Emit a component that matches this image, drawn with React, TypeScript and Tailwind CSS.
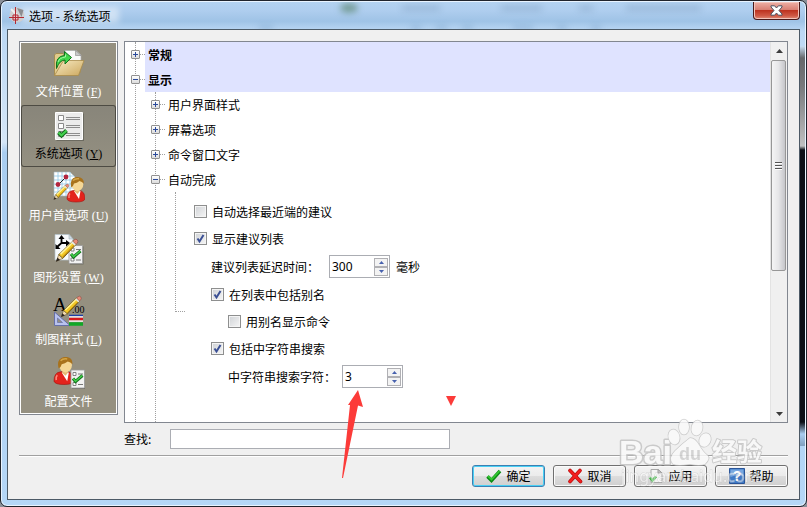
import { useState, type ReactNode } from "react";
import clsx from "clsx";

interface SideItem {
  id: string;
  label: string;
  hotkey?: string;
  icon: ReactNode;
}

// tip sits at 0,20 and the eraser at 20,0
function Pencil({ x = 0, y = 0, scale = 1 }: { x?: number; y?: number; scale?: number }) {
  return (
    <g transform={`translate(${x} ${y}) scale(${scale})`}>
      <path d="M2 14.500 15 2 18 5 5.800 18z" fill="#f3c925" stroke="#5b4a10" strokeWidth="0.8" />
      <path d="M3.800 14 15.200 3" stroke="#fff29a" strokeWidth="1.400" />
      <path d="M5.800 16.800 17.200 5.200" stroke="#b98510" strokeWidth="1" />
      <path d="M16.500.8Q18-.5 19.200.8T19.300 3.800L18 5 15 2z" fill="#e98a78" stroke="#8a5148" strokeWidth="0.6" />
      <path d="M14.300 2.700 17.300 5.700" stroke="#e4e8ec" strokeWidth="1.500" />
      <path d="M0 20.500 2 14.500 5.800 18z" fill="#f6ddb4" stroke="#5b4a10" strokeWidth="0.5" />
      <path d="M-.5 21 .8 17.200 3.300 19.500z" fill="#2a2420" />
    </g>
  );
}

function Person({ x = 0, y = 0 }: { x?: number; y?: number }) {
  return (
    <g transform={`translate(${x} ${y})`}>
      <path d="M0 22Q0 14 6 13.500H12Q18 14 18 22 17 25 9 25T0 22z" fill="#e3231c" stroke="#a31410" strokeWidth="0.6" />
      <path d="M3 16.500Q1.500 18 2 21" stroke="#ff8a7c" strokeWidth="1.400" fill="none" />
      <path d="M7 14H13.500L12 22z" fill="#fff" />
      <path d="M7.500 10H12.500V14.500L10.500 17 7.500 14.500z" fill="#e5b975" />
      <ellipse cx="10.500" cy="7.500" rx="5.800" ry="6.500" fill="#f5d795" />
      <path d="M4.200 10.500Q2 1.500 9 0 17-.8 16.800 6.500 15 4.500 12.500 4 10 6 7 6.500 6.500 9 4.200 10.500z" fill="#a8721c" />
      <path d="M6 3.500Q8 1.200 12 1.800" stroke="#d4a648" strokeWidth="1.400" fill="none" />
    </g>
  );
}

function MiniList({ x = 0, y = 0 }: { x?: number; y?: number }) {
  return (
    <g transform={`translate(${x} ${y})`}>
      <path d="M1 1H14.500V19H1z" fill="#55554c" opacity="0.6" />
      <path d="M0 0H13.500V18H0z" fill="#f2f2f2" stroke="#9a9a9a" strokeWidth="0.8" />
      <path d="M2 2.500H5V5.500H2zM2 12.500H5V15.500H2z" fill="#fff" stroke="#777" strokeWidth="0.9" />
      <path d="M7 4H12M7 14.500H12" stroke="#777" />
      <path d="M2 8.500 4.500 11.500 11.500 5.500" fill="none" stroke="#14701c" strokeWidth="3" />
      <path d="M2.200 8.500 4.500 11.200 11.300 5.500" fill="none" stroke="#3fd04a" strokeWidth="1.500" />
    </g>
  );
}

const svgProps = { width: 32, height: 32, viewBox: "0 0 32 32", fill: "none", "aria-hidden": true } as const;

const SIDE_ITEMS: SideItem[] = [
  {
    id: "files",
    label: "文件位置",
    hotkey: "F",
    icon: (
      <svg {...svgProps}>
        <defs>
          <linearGradient id="folder" x1="0" y1="0" x2="1" y2="1">
            <stop offset="0" stopColor="#f7ebc4" />
            <stop offset="1" stopColor="#cda85e" />
          </linearGradient>
        </defs>
        <path d="M1.500 28.500V8L3 6.500H10L12 9H27V26z" fill="#e2cb8c" stroke="#a78d52" />
        <path d="M12 20V3.500H23L28 8V20z" fill="#fafafa" stroke="#aaa" strokeWidth="0.7" />
        <path d="M22.500 3.500V8.500H28z" fill="#c9c9c9" stroke="#888" strokeWidth="0.6" />
        <path d="M1.500 28.500 9 16 11 13.500H31L25.500 28.500z" fill="url(#folder)" stroke="#a98b4a" strokeWidth="0.8" />
        <path d="M3.500 21.500Q2 9 11.500 8.500V4.500L18.500 10.500 12 17V13Q6.500 13 3.500 21.500z" fill="#3fd64a" stroke="#11701c" />
        <path d="M5 15Q6.500 10.500 12.500 10V7.500" stroke="#a6f5a4" />
      </svg>
    ),
  },
  {
    id: "system",
    label: "系统选项",
    hotkey: "Y",
    icon: (
      <svg {...svgProps}>
        <path d="M3.500 4.500H31V32H3.500z" fill="#55554c" opacity="0.6" />
        <path d="M2.500 3.500H29.500V30.500H2.500z" fill="#ececec" stroke="#fff" />
        <path d="M5.500 6.500H10.500V11.500H5.500zM5.500 14.500H10.500V19.500H5.500zM5.500 22.500H10.500V27.500H5.500z" fill="#fff" stroke="#8b8b8b" />
        <path d="M13 8.500H27M13 10.500H27M13 16.500H27M13 18.500H27M13 24.500H27M13 26.500H27" stroke="#8d8d8d" />
        <path d="M5.500 23.500 8.500 26.500 13.500 21.500" stroke="#126b1c" strokeWidth="4" />
        <path d="M5.500 23.500 8.500 26.300 13.500 21.500" stroke="#43d24e" strokeWidth="2" />
      </svg>
    ),
  },
  {
    id: "user",
    label: "用户首选项",
    hotkey: "U",
    icon: (
      <svg {...svgProps}>
        <path d="M1 1H17L22 6V25H1z" fill="#fff" stroke="#a8bac4" strokeWidth="0.6" />
        <path d="M5 1V25M9 1V25M13 1V25M17 1V25M1 5H21M1 9H22M1 13H22M1 17H22M1 21H22" stroke="#8ec5e4" strokeWidth="0.8" />
        <path d="M5 14 13 6" stroke="#222" />
        <circle cx="5" cy="13.500" r="2.400" fill="#b3263f" />
        <circle cx="13" cy="6" r="2.400" fill="#b3263f" />
        <Person x={14} y={6} />
        <Pencil x={1} y={13} scale={0.75} />
      </svg>
    ),
  },
  {
    id: "drawing",
    label: "图形设置",
    hotkey: "W",
    icon: (
      <svg {...svgProps}>
        <path d="M2 1.500H16L20 6V27H2z" fill="#f7fafc" stroke="#b2c2cc" strokeWidth="0.7" />
        <path d="M16 1.500V6H20z" fill="#d3dde4" stroke="#a2b2bc" strokeWidth="0.6" />
        <path d="M8.500 4V10L4 14M8.500 10H15" stroke="#000" strokeWidth="1.800" />
        <path d="M5.500 6 8.500 2 11.500 6zM2.500 11V16H7.500z" fill="#000" />
        <path d="M13 7 17 10 13 13.500z" fill="#000" />
        <MiniList x={16} y={12.500} />
        <Pencil x={3.500} y={6} scale={1.080} />
      </svg>
    ),
  },
  {
    id: "style",
    label: "制图样式",
    hotkey: "L",
    icon: (
      <svg {...svgProps}>
        <text x="0" y="16" fontSize="19" fontFamily="Liberation Serif, serif" fill="#000">A</text>
        <text x="19" y="18" fontSize="10" fontFamily="Liberation Serif, serif" fill="#000">.00</text>
        <path d="M1.500 17V30.500H17z" fill="#b9c2ee" stroke="#6670a8" />
        <path d="M4.500 23V27.500H9.500z" fill="#959080" stroke="#6670a8" strokeWidth="0.7" />
        <path d="M16 20.500H30" stroke="#1c3fa8" strokeWidth="1.500" />
        <path d="M16 22H30M16 26H30" stroke="#fff" strokeWidth="1.500" />
        <path d="M16 24H30" stroke="#d3181c" strokeWidth="2.500" />
        <path d="M16 29H30" stroke="#10a826" strokeWidth="3.500" />
        <Pencil x={8.500} y={1} />
      </svg>
    ),
  },
  {
    id: "profile",
    label: "配置文件",
    icon: (
      <svg {...svgProps}>
        <g transform="translate(1 0) scale(1.100)">
          <Person />
        </g>
        <MiniList x={18} y={13} />
      </svg>
    ),
  },
];

function Expander({ open, onToggle, label }: { open: boolean; onToggle?: () => void; label: string }) {
  return (
    <>
      <button
        type="button"
        aria-label={label}
        aria-expanded={open}
        onClick={onToggle}
        className="-ml-[5px] grid h-[9px] w-[9px] shrink-0 place-items-center rounded-[1px] border border-[#919191] bg-gradient-to-b from-white to-[#dcdcdc]"
      >
        <svg width="5" height="5" viewBox="0 0 5 5" stroke="#2b4a9b" aria-hidden>
          <path d={open ? "M0 2.500H5" : "M0 2.500H5M2.500 0V5"} />
        </svg>
      </button>
      <span className="h-px w-[5px] shrink-0 border-t border-dotted border-[#a0a0a0]" />
    </>
  );
}

function Group({ title, open = false, strong = false }: { title: string; open?: boolean; strong?: boolean }) {
  const [isOpen, setOpen] = useState(open);
  return (
    <div className="flex h-[25px] items-center">
      <Expander open={isOpen} onToggle={() => setOpen(!isOpen)} label={title} />
      <span className={clsx("flex h-full flex-1 items-center pl-[3px]", strong && "bg-[#dfe3ff] font-bold")}>{title}</span>
    </div>
  );
}

function Check({ label, checked = false, className }: { label: string; checked?: boolean; className?: string }) {
  return (
    <label className={clsx("flex h-[27px] items-center gap-[5px]", className)}>
      <span className="relative h-[13px] w-[13px] shrink-0">
        <input
          type="checkbox"
          defaultChecked={checked}
          className="peer block h-[13px] w-[13px] appearance-none border border-[#8e8f8f] bg-gradient-to-br from-[#cfd2d6] to-[#f6f6f6] shadow-[inset_0_0_0_1px_#f4f4f4]"
        />
        <svg
          className="pointer-events-none absolute inset-0 hidden peer-checked:block"
          width="13"
          height="13"
          viewBox="0 0 13 13"
          fill="none"
          aria-hidden
        >
          <path d="M3.500 6.500 5.500 9.500 9.500 3" stroke="#3a4f94" strokeWidth="2" />
        </svg>
      </span>
      {label}
    </label>
  );
}

interface SpinProps {
  id: string;
  label: string;
  value: number;
  unit?: string;
  className?: string;
  labelClass?: string;
}

function Spin({ id, label, value, unit, className, labelClass }: SpinProps) {
  const [v, setV] = useState(value);
  return (
    <div className={clsx("flex h-[29px] items-center gap-1.5", className)}>
      <label htmlFor={id} className={labelClass}>{label}</label>
      <div className="flex h-[23px] w-[61px] items-center border border-[#abadb3] bg-white pr-px">
        <input
          id={id}
          value={v}
          onChange={(e) => setV(Number(e.target.value) || 0)}
          className="h-full w-0 flex-1 bg-transparent pl-0.5 font-['Noto_Sans',sans-serif] outline-none"
        />
        <div className="flex flex-col">
          {[1, -1].map((step) => (
            <button
              key={step}
              type="button"
              aria-label={step > 0 ? "增加" : "减少"}
              onClick={() => setV(v + step)}
              className="grid h-[9px] w-[14px] place-items-center border border-[#b0b0b4] bg-[#f3f3f3]"
            >
              <svg width="5" height="3" viewBox="0 0 5 3" fill="#4761ae" aria-hidden>
                <path d={step > 0 ? "M0 3 2.500 0 5 3z" : "M0 0H5L2.500 3z"} />
              </svg>
            </button>
          ))}
        </div>
      </div>
      {unit && <span>{unit}</span>}
    </div>
  );
}

function ScrollBar() {
  return (
    <div className="flex w-[17px] shrink-0 flex-col border-l border-[#e3e3e3] bg-[#f0f0f0]">
      <button type="button" aria-label="向上滚动" className="grid h-[18px] place-items-center">
        <svg width="7" height="4" viewBox="0 0 7 4" fill="#3c3c3c" aria-hidden><path d="M0 4 3.500 0 7 4z" /></svg>
      </button>
      <div className="flex-1">
        <div className="mr-px grid h-[61%] place-items-center rounded-[2px] border border-[#979797] bg-gradient-to-r from-[#f5f5f5] via-[#e6e6e8] to-[#c5c6ca]">
          <svg width="8" height="8" viewBox="0 0 8 8" aria-hidden>
            <path d="M0 .5H7M0 3.500H7M0 6.500H7" stroke="#555" />
            <path d="M0 1.500H7M0 4.500H7M0 7.500H7" stroke="#fff" />
          </svg>
        </div>
      </div>
      <button type="button" aria-label="向下滚动" className="grid h-4 place-items-center">
        <svg width="7" height="4" viewBox="0 0 7 4" fill="#3c3c3c" aria-hidden><path d="M0 0H7L3.500 4z" /></svg>
      </button>
    </div>
  );
}

function PushButton({ icon, label, primary = false }: { icon: ReactNode; label: string; primary?: boolean }) {
  return (
    <button
      type="button"
      className={clsx(
        "flex h-[22px] w-[73px] items-center justify-center gap-1 rounded-[3px] border bg-linear-[180deg,#f3f3f3_0%,#ebebeb_50%,#dddddd_51%,#cfcfcf_100%]",
        primary ? "border-[#3c7fb1] shadow-[inset_0_0_0_1px_#48d0f5]" : "border-[#707070] shadow-[inset_0_0_0_1px_#fbfbfb]",
      )}
    >
      {icon}
      {label}
    </button>
  );
}

function TitleBar() {
  return (
    <header className="relative flex h-[27px] items-start overflow-hidden">
      <svg className="absolute inset-0 h-full w-full" aria-hidden>
        <g className="blur-[3px]">
          <ellipse cx="342" cy="6" rx="9" ry="5" fill="#5f8a78" opacity="0.7" />
          <path d="M395 6H433M494 6H535M572 6H586M619 6H694" stroke="#6c8cab" strokeWidth="6" opacity="0.3" />
          <path d="M252 26H266M404 26H414M429 26H440M455 26H466M506 26H526M550 26H560M584 26H594" stroke="#4878a8" strokeWidth="3" opacity="0.4" />
          <path d="M14 13H112" stroke="#fff" strokeWidth="16" opacity="0.45" />
        </g>
      </svg>
      <div className="relative flex flex-1 items-center gap-1 self-center pl-0.5">
        <svg width="16" height="18" viewBox="0 0 16 18" fill="none" aria-hidden>
          <circle cx="8" cy="8" r="7.500" fill="#cfcfd1" />
          <path d="M8 1 14.500 3 12.500 10z" fill="#8c8c90" />
          <path d="M2 2 9 9" stroke="#eee" strokeWidth="2" />
          <path d="M6.500 0V17M0 10.500H15" stroke="#b32833" />
          <path d="M4 8H9V13H4z" stroke="#b32833" fill="#e9c5c8" />
          <path d="M6.500 8V13M4 10.500H9" stroke="#b32833" />
        </svg>
        <h1>选项 - 系统选项</h1>
      </div>
      <button
        type="button"
        aria-label="关闭"
        className="relative grid h-[18px] w-[47px] place-items-center rounded-b-[4px] border border-t-0 border-[#4a1a1a] bg-linear-[180deg,#eeb0a6_0%,#d98074_45%,#bd3320_50%,#cf5844_80%,#e08c78_100%] shadow-[inset_0_0_0_1px_#f2c4bb]"
      >
        <svg width="13" height="11" viewBox="0 0 13 11" aria-hidden>
          <path d="M1 .8H4.600L6.500 3 8.400.8H12V2L9 5.500 12 9V10.200H8.400L6.500 8 4.600 10.200H1V9L4 5.500 1 2z" fill="#fff" stroke="#4c4f5e" />
        </svg>
      </button>
    </header>
  );
}

function Watermark() {
  return (
    <svg className="pointer-events-none absolute right-[38px] bottom-[12px]" width="150" height="78" viewBox="0 0 150 78" aria-hidden>
      <g fill="#fafafa" stroke="#c4c4c4" strokeWidth="1.500" opacity="0.85" paintOrder="stroke" strokeLinejoin="round">
        <text x="1" y="48" fontSize="34" fontWeight="700" fontFamily="Liberation Sans, sans-serif" strokeWidth="3">Bai</text>
        <ellipse cx="56" cy="21" rx="5.500" ry="7.500" transform="rotate(-15 56 21)" />
        <ellipse cx="66" cy="11" rx="5" ry="7.500" />
        <ellipse cx="79" cy="12" rx="5.500" ry="7.500" transform="rotate(12 79 12)" />
        <ellipse cx="87" cy="24" rx="5.500" ry="7" transform="rotate(25 87 24)" />
        <path d="M72 22Q77 22 81 29T89 39 87 48Q82 50 72 48 60 50 55 48 50 42 57 35T72 22z" />
        <text x="61" y="44" fontSize="18" fontWeight="700" fontFamily="Liberation Sans, sans-serif" fill="#cfcfcf" stroke="none">du</text>
        <text x="94" y="45" fontSize="25" fontWeight="700" fontFamily="Noto Sans CJK SC, sans-serif" strokeWidth="2">经验</text>
      </g>
      <text x="3" y="66" fontSize="16" fontFamily="Noto Sans, sans-serif" fill="#fff" stroke="#bbb" strokeWidth="1" paintOrder="stroke" opacity="0.5">
        jingyan.baidu.com
      </text>
    </svg>
  );
}

function Annotations() {
  return (
    <svg className="pointer-events-none absolute top-[387px] left-[337px]" width="122" height="92" viewBox="0 0 122 92" fill="#fc3b39" aria-hidden>
      <path d="M20 2 25 19 20 17.500 5 90 4 90 12 17 10 17z" />
      <path d="M108 8H118L113 18z" />
    </svg>
  );
}

const icons = {
  ok: (
    <svg width="16" height="16" viewBox="0 0 16 16" fill="none" aria-hidden>
      <path d="M1.500 8.500 5.500 12.500 14 3" stroke="#0a8a14" strokeWidth="3.500" />
      <path d="M2 8 5.500 11.500 13.500 3" stroke="#36c832" strokeWidth="1.800" />
    </svg>
  ),
  cancel: (
    <svg width="16" height="16" viewBox="0 0 16 16" fill="none" strokeLinecap="round" aria-hidden>
      <path d="M3 2.500 13.500 13.500M13 2.500 3 13.500" stroke="#b80a0a" strokeWidth="3.600" />
      <path d="M3 2.500 13.500 13.500M13 2.500 3 13.500" stroke="#f32020" strokeWidth="2.400" />
    </svg>
  ),
  apply: (
    <svg width="16" height="16" viewBox="0 0 16 16" fill="none" aria-hidden>
      <path d="M3 1.500H10L14 5V14.500H3z" fill="#f4f4f4" stroke="#a8a8a8" />
      <path d="M10 1.500V5H14z" fill="#ccc" stroke="#999" />
      <path d="M2 9.500 4.500 12.500 8 8.500" stroke="#2fae34" strokeWidth="2.500" />
    </svg>
  ),
  help: (
    <svg width="16" height="16" viewBox="0 0 16 16" aria-hidden>
      <path d="M.5.500H15.500V15.500H.5z" fill="#3f7ac6" stroke="#2a5599" />
      <path d="M1.500 1.500H14.500V8Q8 6 1.500 9z" fill="#78a7e0" />
      <text x="8" y="13" fontSize="14" fontWeight="700" textAnchor="middle" fontFamily="Liberation Sans, sans-serif" fill="#fff">?</text>
    </svg>
  ),
};

export default function App() {
  const [active, setActive] = useState("system");

  return (
    <div className="min-h-screen bg-[#8a8f98] font-['Noto_Sans_CJK_SC',sans-serif] text-xs text-black">
      <div className="relative flex min-h-screen flex-col rounded-[7px] border border-[#20242c] bg-linear-[180deg,#b4d3f1_0%,#aecdee_2%,#9fc3e6_4%,#bcd8f4_6%,#d5e6f7_28%,#a9cdf0_30%,#b5d7f7_100%] px-1.5 pb-1.5 shadow-[inset_0_0_0_1px_#e9f4ff]">
        <div className="absolute top-[45px] right-px bottom-[60px] w-[5px] bg-linear-[180deg,#c8def3_0%,#66686b_3%,#77797c_10%,#c0c0c0_25%,#0b0f16_26%,#0b0f16_94%,#a9cdf0_97%,#7f9fbe_100%]" />
        <div className="pt-px">
          <TitleBar />
        </div>

        <main className="relative flex flex-1 flex-col border border-[#4c5a66] bg-[#f0f0f0] p-[11px]">
          <div className="flex flex-1 gap-1.5">
            <nav className="w-[99px] shrink-0 self-start border border-[#828790] bg-[#959080] p-px shadow-[inset_0_0_0_1px_#fff]">
              {SIDE_ITEMS.map((item) => (
                <button
                  key={item.id}
                  type="button"
                  onClick={() => setActive(item.id)}
                  className={clsx(
                    "flex h-[62px] w-full flex-col items-center gap-1 pt-1 leading-4 last:h-[60px]",
                    active === item.id
                      ? "rounded-[3px] bg-gradient-to-b from-[#88857a] to-[#949081] text-black shadow-[inset_0_0_0_1px_#4d4b43]"
                      : "text-white",
                  )}
                >
                  {item.icon}
                  <span className="whitespace-pre">
                    {item.label}
                    {item.hotkey && (
                      <span className="font-['Liberation_Serif',serif]">
                        {" ("}
                        <u>{item.hotkey}</u>)
                      </span>
                    )}
                  </span>
                </button>
              ))}
            </nav>

            <div className="flex min-w-0 flex-1 flex-col gap-1.5">
              <section className="flex flex-1 border border-[#828790] bg-white">
                <div className="flex flex-1 pl-[10px]">
                  <div className="flex flex-1 flex-col border-l border-dotted border-[#a0a0a0]">
                    <Group title="常规" strong />
                    <Group title="显示" strong open />
                    <div className="ml-[19px] flex flex-1 flex-col border-l border-dotted border-[#a0a0a0]">
                      <Group title="用户界面样式" />
                      <Group title="屏幕选项" />
                      <Group title="命令窗口文字" />
                      <Group title="自动完成" open />
                      <div className="flex pl-[19px]">
                        <div className="h-[120px] w-[10px] border-b border-l border-dotted border-[#a0a0a0]" />
                        <div className="pt-1.5 pl-[9px]">
                          <Check label="自动选择最近端的建议" />
                          <Check label="显示建议列表" checked />
                          <Spin id="delay" label="建议列表延迟时间：" value={300} unit="毫秒" className="pl-[17px]" labelClass="w-28" />
                          <Check label="在列表中包括别名" checked className="pl-[17px]" />
                          <Check label="用别名显示命令" className="pl-[34px]" />
                          <Check label="包括中字符串搜索" checked className="pl-[17px]" />
                          <Spin id="chars" label="中字符串搜索字符：" value={3} className="pl-[34px]" />
                        </div>
                      </div>
                    </div>
                  </div>
                </div>
                <ScrollBar />
              </section>

              <div className="flex items-center">
                <label htmlFor="find" className="w-[46px]">查找:</label>
                <input id="find" className="h-5 w-[280px] border border-[#abadb3] bg-white px-1 outline-none" />
              </div>
            </div>
          </div>

          <hr className="mt-1.5 border-t border-b border-t-[#a0a0a0] border-b-white" />

          <footer className="flex justify-end gap-2 pt-2 pb-px">
            <PushButton icon={icons.ok} label="确定" primary />
            <PushButton icon={icons.cancel} label="取消" />
            <PushButton icon={icons.apply} label="应用" />
            <PushButton icon={icons.help} label="帮助" />
          </footer>
        </main>

        <Annotations />
        <Watermark />
      </div>
    </div>
  );
}
